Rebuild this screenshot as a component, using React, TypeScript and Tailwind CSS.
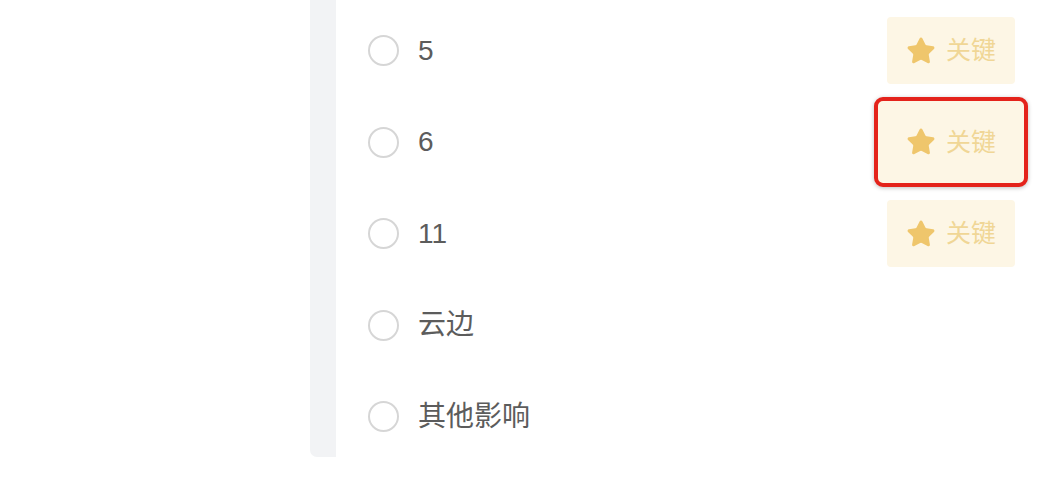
import { Star } from 'lucide-react';

interface Option {
  label: string;
  key?: 'normal' | 'active';
}

const OPTIONS: Option[] = [
  { label: '5', key: 'normal' },
  { label: '6', key: 'active' },
  { label: '11', key: 'normal' },
  { label: '云边' },
  { label: '其他影响' },
];

const FONT = { fontFamily: '"Liberation Sans", "Noto Sans CJK SC", sans-serif' };

function KeyTag({ active }: { active: boolean }) {
  return (
    <div
      className={
        active
          ? 'flex items-center justify-center gap-[10px] w-[154px] h-[90px] mr-[18px] rounded-[9px] border-[4px] border-[#e4231b] bg-[#fdf6e5] shadow-[0_1px_4px_rgba(0,0,0,0.25)]'
          : 'flex items-center justify-center gap-[10px] w-[128px] h-[67px] mr-[31px] rounded-[4px] bg-[#fdf6e5]'
      }
    >
      <Star className="w-[30px] h-[30px] text-[#efc66c]" fill="#efc66c" strokeWidth={1.5} strokeLinejoin="round" />
      <span className="text-[25px] leading-none text-[#f0d696]">关键</span>
    </div>
  );
}

export default function App() {
  return (
    <div className="w-[1046px] h-[482px] bg-white overflow-hidden" style={FONT}>
      <div className="ml-[310px] flex h-[457px] overflow-hidden rounded-bl-[7px] bg-[#f2f3f5]">
        <div className="w-[26px] shrink-0" />
        <div className="flex-1 bg-white pt-[5px]">
          {OPTIONS.map((opt) => (
            <div key={opt.label} className="flex items-center h-[91.5px]">
              <span className="ml-[32px] w-[31px] h-[31px] shrink-0 rounded-full border-2 border-[#d6d6d6]" />
              <span className="ml-[19px] text-[28px] text-[#5c5c5c]">{opt.label}</span>
              <div className="flex-1" />
              {opt.key && <KeyTag active={opt.key === 'active'} />}
            </div>
          ))}
        </div>
      </div>
    </div>
  );
}
